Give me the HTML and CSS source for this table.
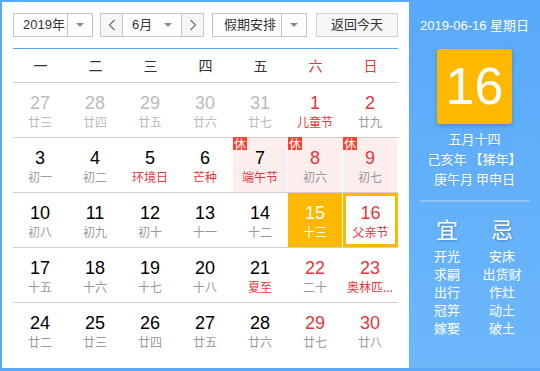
FILE: index.html
```html
<!DOCTYPE html>
<html lang="zh">
<head>
<meta charset="utf-8">
<link rel="stylesheet" href="styles.css">
</head>
<body>
<div class="cal">
  <div class="main">
    <div class="toolbar">
      <div class="sel sel-year"><span class="sel-text">2019年</span><span class="sel-arrow"><i class="tri"></i></span></div>
      <div class="sel sel-month">
        <span class="nav"><svg width="8" height="12" viewBox="0 0 8 12"><polyline points="6.5,1 1.5,6 6.5,11" fill="none" stroke="#777" stroke-width="1.3"/></svg></span>
        <span class="sel-text month-text">6月<i class="tri"></i></span>
        <span class="nav"><svg width="8" height="12" viewBox="0 0 8 12"><polyline points="1.5,1 6.5,6 1.5,11" fill="none" stroke="#777" stroke-width="1.3"/></svg></span>
      </div>
      <div class="sel sel-holiday"><span class="sel-text">假期安排</span><span class="sel-arrow"><i class="tri"></i></span></div>
      <div class="btn">返回今天</div>
    </div>
    <div class="grid">
      <div class="week">
        <span>一</span><span>二</span><span>三</span><span>四</span><span>五</span><span class="red">六</span><span class="red">日</span>
      </div>
      <div class="row">
        <div class="cell other"><b>27</b><em>廿三</em></div>
        <div class="cell other"><b>28</b><em>廿四</em></div>
        <div class="cell other"><b>29</b><em>廿五</em></div>
        <div class="cell other"><b>30</b><em>廿六</em></div>
        <div class="cell other"><b>31</b><em>廿七</em></div>
        <div class="cell wkd"><b>1</b><em class="fest">儿童节</em></div>
        <div class="cell wkd"><b>2</b><em>廿九</em></div>
      </div>
      <div class="row">
        <div class="cell"><b>3</b><em>初一</em></div>
        <div class="cell"><b>4</b><em>初二</em></div>
        <div class="cell"><b>5</b><em class="fest">环境日</em></div>
        <div class="cell"><b>6</b><em class="fest">芒种</em></div>
        <div class="cell rest"><span class="badge">休</span><b>7</b><em class="fest">端午节</em></div>
        <div class="cell rest wkd"><span class="badge">休</span><b>8</b><em>初六</em></div>
        <div class="cell rest wkd"><span class="badge">休</span><b>9</b><em>初七</em></div>
      </div>
      <div class="row">
        <div class="cell"><b>10</b><em>初八</em></div>
        <div class="cell"><b>11</b><em>初九</em></div>
        <div class="cell"><b>12</b><em>初十</em></div>
        <div class="cell"><b>13</b><em>十一</em></div>
        <div class="cell"><b>14</b><em>十二</em></div>
        <div class="cell sel-day"><b>15</b><em>十三</em></div>
        <div class="cell today wkd"><b>16</b><em class="fest">父亲节</em></div>
      </div>
      <div class="row">
        <div class="cell"><b>17</b><em>十五</em></div>
        <div class="cell"><b>18</b><em>十六</em></div>
        <div class="cell"><b>19</b><em>十七</em></div>
        <div class="cell"><b>20</b><em>十八</em></div>
        <div class="cell"><b>21</b><em class="fest">夏至</em></div>
        <div class="cell wkd"><b>22</b><em>二十</em></div>
        <div class="cell wkd"><b>23</b><em class="fest">奥林匹...</em></div>
      </div>
      <div class="row last">
        <div class="cell"><b>24</b><em>廿二</em></div>
        <div class="cell"><b>25</b><em>廿三</em></div>
        <div class="cell"><b>26</b><em>廿四</em></div>
        <div class="cell"><b>27</b><em>廿五</em></div>
        <div class="cell"><b>28</b><em>廿六</em></div>
        <div class="cell wkd"><b>29</b><em>廿七</em></div>
        <div class="cell wkd"><b>30</b><em>廿八</em></div>
      </div>
    </div>
  </div>
  <div class="side">
    <div class="side-date">2019-06-16 星期日</div>
    <div class="bigday">16</div>
    <div class="lunar">
      <div>五月十四</div>
      <div>己亥年 【猪年】</div>
      <div>庚午月 甲申日</div>
    </div>
    <div class="sep"></div>
    <div class="yiji">
      <div class="col">
        <div class="yj-title">宜</div>
        <div>开光</div><div>求嗣</div><div>出行</div><div>冠笄</div><div>嫁娶</div>
      </div>
      <div class="col">
        <div class="yj-title">忌</div>
        <div>安床</div><div>出货财</div><div>作灶</div><div>动土</div><div>破土</div>
      </div>
    </div>
  </div>
</div>
</body>
</html>
```

FILE: styles.css
```css
* { box-sizing: border-box; }
html, body { margin: 0; padding: 0; }
body {
  font-family: "Liberation Sans", Arial, "Noto Sans CJK SC", sans-serif;
  background: #fff;
}
.cal {
  width: 540px;
  height: 371px;
  display: flex;
  background: #5aa9f8;
  padding: 2px 0 3px 2px;
}
.main {
  width: 407px;
  height: 366px;
  background: #fff;
  padding: 11px 11px 0 11px;
}
.toolbar {
  display: flex;
  height: 24px;
  font-size: 13px;
  color: #333;
}
.sel {
  display: flex;
  height: 24px;
  border: 1px solid #c4c4c4;
  background: #fff;
}
.sel-year { width: 80px; margin-right: 7px; }
.sel-month { width: 104px; margin-right: 8px; }
.sel-holiday { width: 95px; margin-right: 9px; }
.sel-text {
  flex: 1;
  display: flex;
  align-items: center;
  padding-left: 9px;
  line-height: 22px;
}
.sel-holiday .sel-text { padding-left: 11px; }
.sel-arrow {
  width: 25px;
  border-left: 1px solid #c4c4c4;
  display: flex;
  align-items: center;
  justify-content: center;
}
.tri {
  display: block;
  width: 0;
  height: 0;
  border-left: 4px solid transparent;
  border-right: 4px solid transparent;
  border-top: 4px solid #8a8a8a;
}
.month-text { position: relative; padding-left: 9px; }
.month-text .tri { margin-left: auto; margin-right: 9px; }
.nav {
  width: 22px;
  background: #f6f6f6;
  display: flex;
  align-items: center;
  justify-content: center;
}
.nav:first-child { border-right: 1px solid #c4c4c4; }
.nav:last-child { border-left: 1px solid #c4c4c4; }
.btn {
  width: 82px;
  height: 24px;
  border: 1px solid #d0d0d0;
  background: #f6f6f6;
  text-align: center;
  line-height: 22px;
  font-size: 13px;
  color: #333;
}
.grid {
  margin-top: 11px;
  border-top: 1px solid #5aa9f8;
}
.week {
  display: grid;
  grid-template-columns: repeat(7, 55px);
  height: 34px;
  border-bottom: 1px solid #cfcfcf;
  font-size: 14px;
  color: #333;
  text-align: center;
  line-height: 33px;
  font-family: "Noto Sans CJK SC", sans-serif;
}
.red { color: #e6353a; }
.row {
  display: grid;
  grid-template-columns: repeat(7, 55px);
  height: 55px;
  border-bottom: 1px solid #cfcfcf;
}
.row.last { border-bottom: none; }
.cell {
  position: relative;
  width: 54px;
  height: 54px;
  padding-top: 10px;
  text-align: center;
}
.cell b {
  display: block;
  font-weight: normal;
  font-size: 18px;
  line-height: 20px;
  color: #000;
}
.cell em {
  display: block;
  font-style: normal;
  font-size: 12px;
  line-height: 18px;
  color: #999;
  font-family: "Noto Sans CJK SC", sans-serif;
  white-space: nowrap;
}
.cell em.fest { color: #e6353a; }
.cell.wkd b { color: #e6353a; }
.cell.other b { color: #bbb; }
.cell.other em { color: #bbb; }
.cell.rest { background: #fdeeee; }
.badge {
  position: absolute;
  left: 0;
  top: -1px;
  width: 14px;
  height: 13px;
  background: #f5432f;
  color: #fff;
  font-size: 12px;
  line-height: 13px;
  text-align: center;
  font-family: "Noto Sans CJK SC", sans-serif;
}
.cell.sel-day { background: #ffb800; }
.cell.sel-day b, .cell.sel-day em { color: #fff; }
.cell.today {
  border: 3px solid #ffb800;
  padding-top: 7px;
  width: 55px;
}
.side {
  width: 131px;
  height: 366px;
  background: linear-gradient(#58a9f9, #6db7fb);
  color: #fff;
  display: flex;
  flex-direction: column;
  align-items: center;
  font-family: "Liberation Sans", Arial, "Noto Sans CJK SC", sans-serif;
}
.side-date {
  margin-top: 15px;
  font-size: 13px;
  line-height: 18px;
}
.bigday {
  margin-top: 14px;
  width: 75px;
  height: 75px;
  border-radius: 3px;
  background: #ffb800;
  box-shadow: 0 2px 4px rgba(0,0,0,0.2);
  font-size: 52px;
  line-height: 75px;
  text-align: center;
  color: #fff;
}
.lunar {
  margin-top: 5px;
  font-size: 13px;
  line-height: 20px;
  text-align: center;
  font-family: "Noto Sans CJK SC", sans-serif;
  text-shadow: 0 1px 1px rgba(0,0,0,0.08);
}
.sep {
  margin-top: 11px;
  width: 110px;
  height: 2px;
  background: #8ec6fb;
}
.yiji {
  display: flex;
  width: 110px;
  margin-top: 14px;
  font-family: "Noto Sans CJK SC", sans-serif;
  font-size: 13px;
  line-height: 18px;
  text-align: center;
}
.col { width: 55px; }
.yj-title {
  font-size: 22px;
  line-height: 24px;
  margin-bottom: 7px;
  text-shadow: 1px 1px 2px rgba(0,0,0,0.25);
}
```
